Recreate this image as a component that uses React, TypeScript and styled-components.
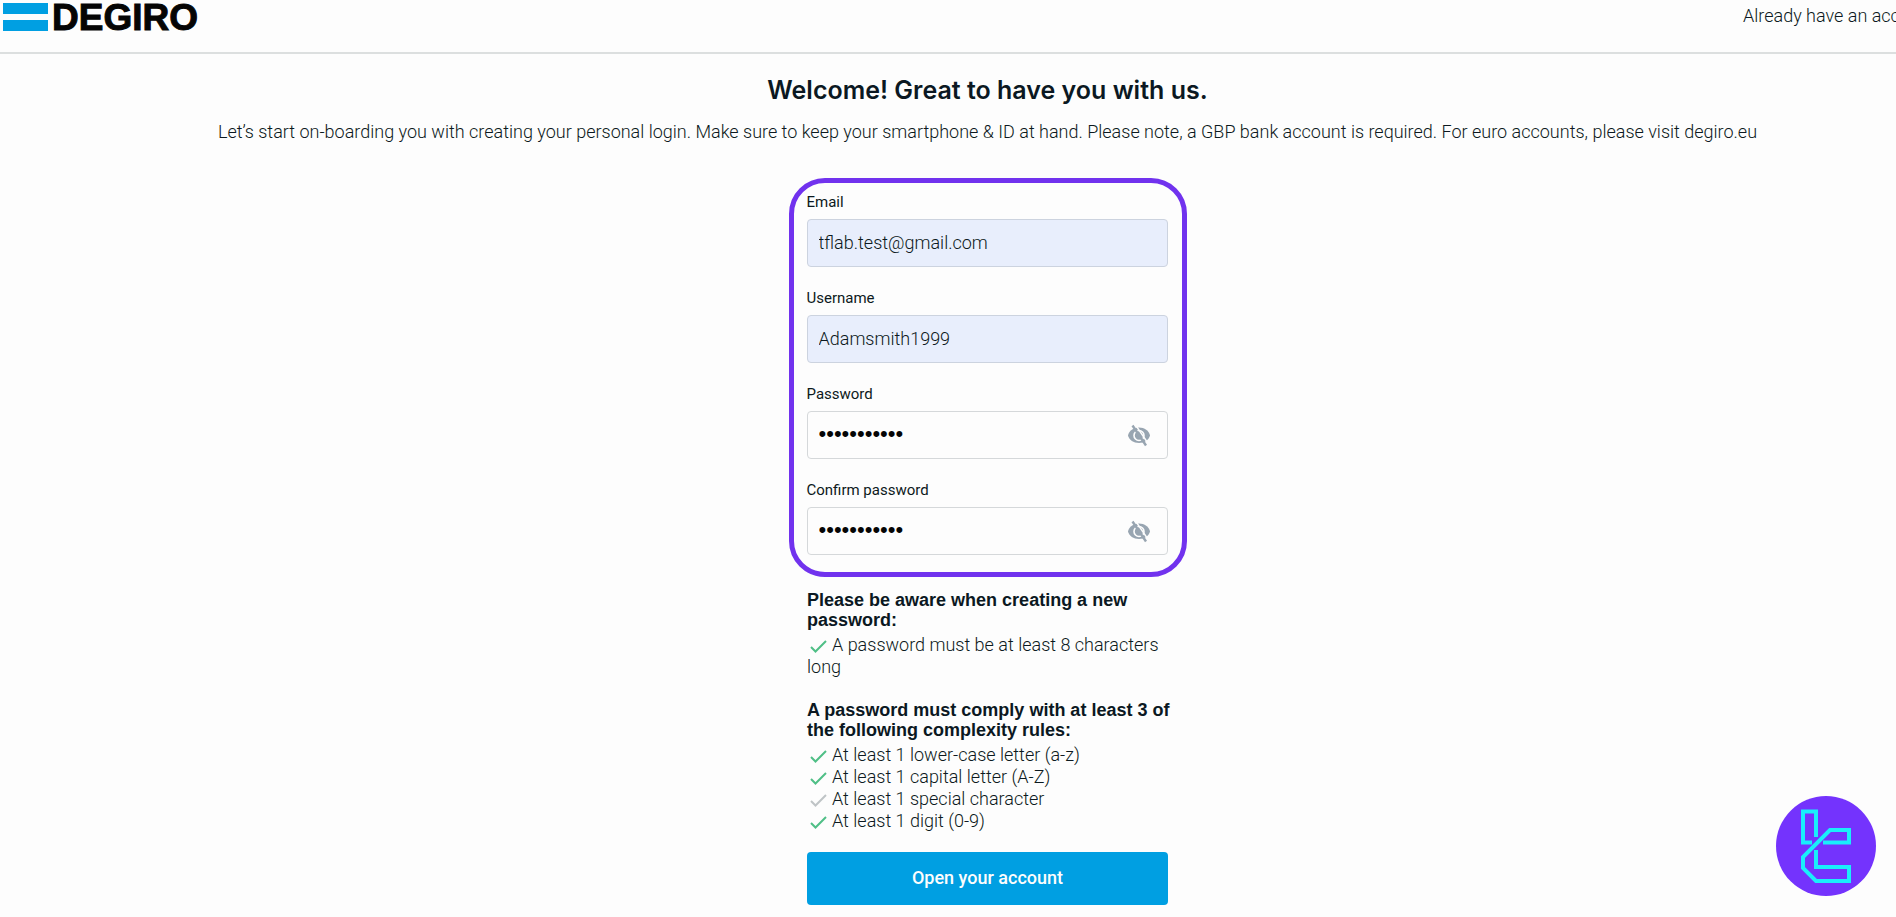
import React, { useState } from "react";
import styled, { createGlobalStyle } from "styled-components";

const GlobalStyle = createGlobalStyle`
  *, *::before, *::after { box-sizing: border-box; }
  body {
    margin: 0;
    background: #fdfdfd;
    color: #0c1920;
    font-family: Roboto, "Liberation Sans", Arial, sans-serif;
    font-size: 18px;
    font-weight: 300;
    line-height: 22px;
  }
`;

const Header = styled.header`
  display: flex;
  justify-content: space-between;
  align-items: flex-start;
  height: 54px;
  border-bottom: 2px solid #dcdfdf;
  overflow-x: clip;
`;

const Logo = styled.a`
  display: flex;
  align-items: center;
  gap: 4px;
  height: 34px;
  padding-left: 3px;
  color: #050505;
  font-family: "Liberation Sans", Arial, sans-serif;
  font-size: 37px;
  font-weight: 700;
  line-height: 38px;
  -webkit-text-stroke: 1px #050505;
  text-decoration: none;
`;

const LogoName = styled.span`
  padding-top: 2px;
`;

const HeaderNote = styled.p`
  width: 153px;
  margin: 0;
  padding-top: 5px;
  white-space: nowrap;
`;

const Main = styled.main`
  display: flex;
  flex-direction: column;
  align-items: center;
  padding: 20px 0 11px 79px;
`;

const Title = styled.h1`
  margin: 0;
  color: #0b1822;
  font-family: Inter, "Liberation Sans", sans-serif;
  font-size: 25px;
  font-weight: 600;
  line-height: 32px;
`;

const Intro = styled.p`
  margin: 15px 0 35px;
  white-space: nowrap;
`;

const Form = styled.form`
  display: flex;
  flex-direction: column;
  align-items: center;
`;

const Credentials = styled.div`
  display: flex;
  flex-direction: column;
  gap: 22px;
  padding: 10px 14px 17px 13px;
  border: 5px solid #7132ee;
  border-radius: 36px;
`;

const Field = styled.div`
  display: flex;
  flex-direction: column;
  gap: 8px;
  width: 361px;
`;

const Label = styled.label`
  font-size: 15px;
  font-weight: 400;
  line-height: 18px;
`;

const InputBox = styled.div<{ $filled?: boolean }>`
  display: flex;
  align-items: center;
  height: 48px;
  padding: 0 16px 0 11px;
  border: 1px solid ${(p) => (p.$filled ? "#ccd3df" : "#d5d8da")};
  border-radius: 4px;
  background: ${(p) => (p.$filled ? "#e8eefc" : "#fdfdfd")};
`;

const Input = styled.input<{ $masked?: boolean }>`
  flex: 1;
  min-width: 0;
  height: 46px;
  padding: 0 0 2px;
  border: 0;
  outline: 0;
  background: transparent;
  color: ${(p) => (p.$masked ? "#050505" : "#0c1920")};
  font-family: ${(p) => (p.$masked ? '"Liberation Sans", Arial, sans-serif' : "inherit")};
  font-size: ${(p) => (p.$masked ? 22 : 18)}px;
  font-weight: 300;
`;

const RevealButton = styled.button`
  display: flex;
  padding: 0;
  border: 0;
  background: none;
  color: #98a5b1;
  cursor: pointer;
`;

const Rules = styled.div`
  width: 361px;
  margin-top: 13px;
`;

const RulesHeading = styled.h2`
  margin: 0 0 4px;
  color: #0b1822;
  font-family: "Liberation Sans", Arial, sans-serif;
  font-size: 18px;
  font-weight: 700;
  line-height: 20px;
  white-space: nowrap;
`;

const RuleList = styled.ul`
  margin: 0 0 22px;
  padding: 0;
  list-style: none;

  &:last-child { margin-bottom: 20px; }
`;

const Tick = styled.svg<{ $met: boolean }>`
  width: 17px;
  height: 14px;
  margin: 0 5px 0 3px;
  vertical-align: -2px;
  fill: none;
  stroke: ${(p) => (p.$met ? "#4fbf86" : "#bfc4c6")};
  stroke-width: 2;
`;

const Submit = styled.button`
  width: 361px;
  height: 53px;
  padding: 0 0 2px;
  border: 0;
  border-radius: 4px;
  background: #009fe2;
  color: #fdfdfd;
  font-family: inherit;
  font-size: 18px;
  font-weight: 500;
  cursor: pointer;
`;

const Badge = styled.a`
  position: fixed;
  right: 20px;
  bottom: 21px;
  width: 100px;
  height: 100px;
  border-radius: 50%;
  background: #7433fd;
`;

function TextField(props: { id: string; label: string; value: string }) {
  const [value, setValue] = useState(props.value);
  return (
    <Field>
      <Label htmlFor={props.id}>{props.label}</Label>
      <InputBox $filled>
        <Input id={props.id} type="text" spellCheck={false} value={value} onChange={(e) => setValue(e.target.value)} />
      </InputBox>
    </Field>
  );
}

function EyeOff() {
  return (
    <svg width="24" height="24" viewBox="0 0 24 24" aria-hidden="true">
      <path d="M1 12.500C2 7.500 6.500 4.500 12 4.500s10 3 11 8c-1 4.500-5.500 7.500-11 7.500S2 17 1 12.500z" fill="currentColor" />
      <circle cx="12" cy="12.500" r="5" fill="none" stroke="#fdfdfd" strokeWidth="1.600" />
      <path d="M8.500 2l13 19" stroke="#fdfdfd" strokeWidth="1.400" />
      <path d="M5.500 2.500l13.500 20" stroke="currentColor" strokeWidth="2.400" />
    </svg>
  );
}

function PasswordField(props: { id: string; label: string }) {
  const [value, setValue] = useState("Adamsmith99");
  const [shown, setShown] = useState(false);
  return (
    <Field>
      <Label htmlFor={props.id}>{props.label}</Label>
      <InputBox>
        <Input
          id={props.id}
          $masked={!shown}
          type={shown ? "text" : "password"}
          value={value}
          onChange={(e) => setValue(e.target.value)}
        />
        <RevealButton type="button" aria-label="Show password" onClick={() => setShown(!shown)}>
          <EyeOff />
        </RevealButton>
      </InputBox>
    </Field>
  );
}

function Rule({ met = true, children }: { met?: boolean; children: React.ReactNode }) {
  return (
    <li>
      <Tick $met={met} viewBox="0 0 17 14" aria-hidden="true">
        <path d="M1 8l4.500 4.500L16 2" />
      </Tick>
      {children}
    </li>
  );
}

export default function App() {
  return (
    <>
      <GlobalStyle />
      <Header>
        <Logo href="#">
          <svg width="45" height="28" viewBox="0 0 45 28" fill="#009fe2" aria-hidden="true">
            <rect width="45" height="11" />
            <rect y="17" width="45" height="11" />
          </svg>
          <LogoName>DEGIRO</LogoName>
        </Logo>
        <HeaderNote>Already have an account?</HeaderNote>
      </Header>
      <Main>
        <Title>Welcome! Great to have you with us.</Title>
        <Intro>
          Let’s start on-boarding you with creating your personal login. Make sure to keep your smartphone &amp; ID at
          hand. Please note, a GBP bank account is required. For euro accounts, please visit degiro.eu
        </Intro>
        <Form onSubmit={(e) => e.preventDefault()}>
          <Credentials>
            <TextField id="email" label="Email" value="tflab.test@gmail.com" />
            <TextField id="username" label="Username" value="Adamsmith1999" />
            <PasswordField id="password" label="Password" />
            <PasswordField id="confirm" label="Confirm password" />
          </Credentials>
          <Rules>
            <RulesHeading>
              Please be aware when creating a new
              <br />
              password:
            </RulesHeading>
            <RuleList>
              <Rule>A password must be at least 8 characters long</Rule>
            </RuleList>
            <RulesHeading>
              A password must comply with at least 3 of
              <br />
              the following complexity rules:
            </RulesHeading>
            <RuleList>
              <Rule>At least 1 lower-case letter (a-z)</Rule>
              <Rule>At least 1 capital letter (A-Z)</Rule>
              <Rule met={false}>At least 1 special character</Rule>
              <Rule>At least 1 digit (0-9)</Rule>
            </RuleList>
          </Rules>
          <Submit type="submit">Open your account</Submit>
        </Form>
      </Main>
      <Badge href="#" aria-label="TradingFinder">
        <svg width="100" height="100" viewBox="0 0 100 100" fill="none" stroke="#19eefb" strokeWidth="4" aria-hidden="true">
          <path d="M36 46.500H27V15.500h13V41" />
          <path d="M47 46.500h26V34H54L27 61v11l13 13h33V71H40V54" />
        </svg>
      </Badge>
    </>
  );
}
